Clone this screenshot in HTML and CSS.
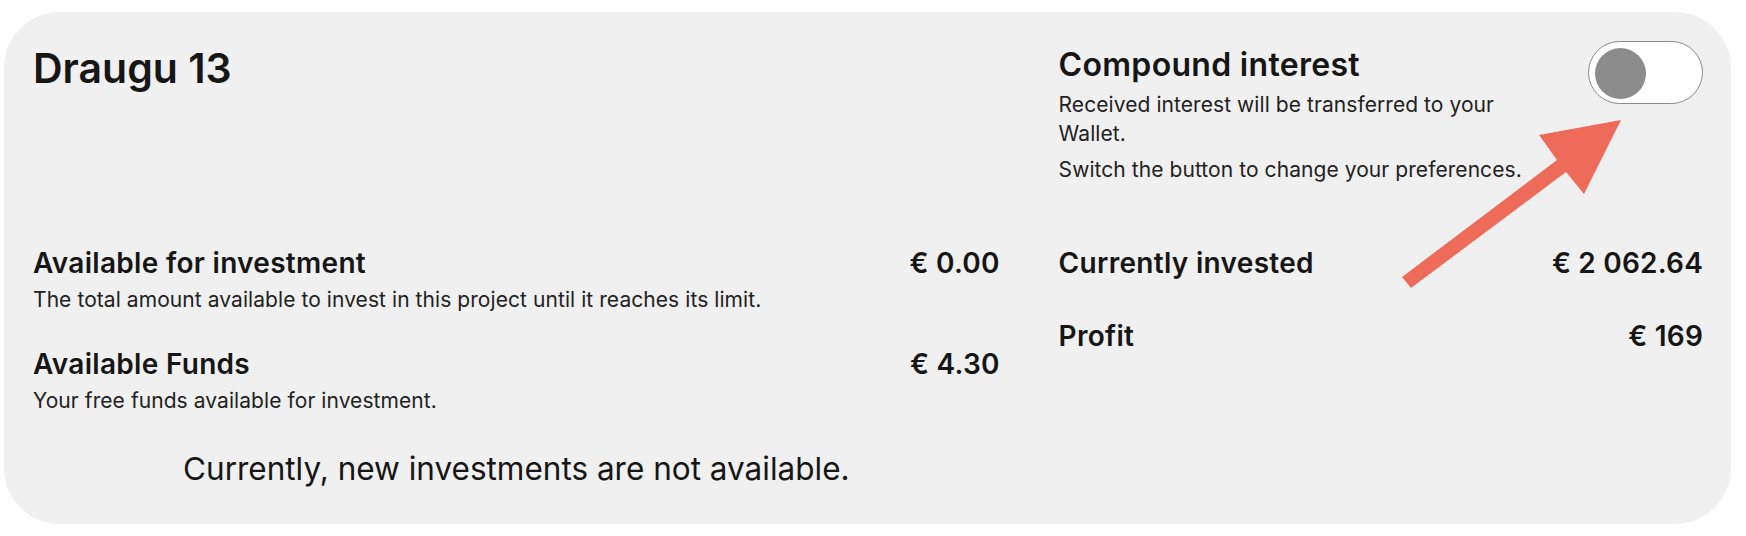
FILE: index.html
```html
<!DOCTYPE html>
<html lang="en">
<head>
    <meta charset="UTF-8">
    <meta name="viewport" content="width=device-width, initial-scale=1.0">
    <title>Draugu 13</title>
    <link rel="stylesheet" href="styles.css">
</head>
<body>
    <div class="card">
        <h2 class="title">Draugu 13</h2>

        <div class="option">
            <div class="option-text">
                <h3>Compound interest</h3>
                <p class="first">Received interest will be transferred to your Wallet.</p>
                <p class="second">Switch the button to change your preferences.</p>
            </div>
            <label class="toggle">
                <input type="checkbox" id="compound">
                <span class="knob"></span>
            </label>
        </div>

        <div class="stats">
            <div class="stat">
                <div class="stat-row">
                    <h4>Available for investment</h4>
                    <span class="amount">€ 0.00</span>
                </div>
                <p>The total amount available to invest in this project until it reaches its limit.</p>
            </div>
            <div class="stat next">
                <div class="stat-row">
                    <h4>Available Funds</h4>
                    <span class="amount">€ 4.30</span>
                </div>
                <p>Your free funds available for investment.</p>
            </div>
            <div class="note">Currently, new investments are not available.</div>
        </div>

        <div class="stats">
            <div class="stat">
                <div class="stat-row">
                    <h4>Currently invested</h4>
                    <span class="amount">€ 2 062.64</span>
                </div>
            </div>
            <div class="stat profit">
                <div class="stat-row">
                    <h4>Profit</h4>
                    <span class="amount">€ 169</span>
                </div>
            </div>
        </div>
    </div>

    <!-- annotation arrow pointing at the switch -->
    <svg class="arrow" viewBox="1395 115 230 180" width="230" height="180">
        <polygon points="1402,277 1557,160 1539,135 1621,120 1584,194 1566,172 1411,288" fill="#ee6b5a"/>
    </svg>
</body>
</html>
```
FILE: styles.css
```css
body {
    font-family: Inter, 'Noto Sans', sans-serif;
    color: #161616;
    background-color: #ffffff;
    margin: 0;
    padding: 12px 15px 13px 4px;
    position: relative;
}
.card {
    background-color: #f0f0f0;
    border-radius: 56px;
    padding: 29px 28px 36px 29px;
    display: grid;
    grid-template-columns: 3fr 2fr;
    column-gap: 59px;
    row-gap: 62px;
}
.title {
    font-size: 41px;
    font-weight: 600;
    line-height: 48px;
    margin: 3px 0 0;
}
.option {
    display: flex;
    justify-content: space-between;
    align-items: flex-start;
    gap: 40px;
}
.option-text {
    flex: 1;
}
.option h3 {
    font-size: 32px;
    font-weight: 600;
    line-height: 38px;
    letter-spacing: 0.3px;
    margin: 5px 0 0;
}
.option p {
    font-size: 21px;
    line-height: 29px;
    letter-spacing: 0.07px;
    color: #222;
    margin: 0;
}
.option p.first {
    margin-top: 6px;
}
.option p.second {
    margin-top: 7px;
}
.toggle {
    position: relative;
    flex: none;
    width: 113px;
    height: 61px;
    border: 1px solid #8a8a8a;
    border-radius: 32px;
    background-color: #ffffff;
    cursor: pointer;
}
.toggle input {
    display: none;
}
.knob {
    position: absolute;
    top: 6px;
    left: 6px;
    width: 51px;
    height: 51px;
    border-radius: 50%;
    background-color: #8c8c8c;
}
.stat-row {
    display: flex;
    justify-content: space-between;
    align-items: baseline;
}
.stat h4 {
    font-size: 28px;
    font-weight: 600;
    line-height: 34px;
    letter-spacing: 0.3px;
    margin: 0;
}
.amount {
    font-size: 28px;
    font-weight: 600;
    line-height: 34px;
    letter-spacing: 0.2px;
}
.stat p {
    font-size: 21px;
    line-height: 29px;
    letter-spacing: 0.07px;
    color: #222;
    margin: 5px 0 0;
}
.stat.next {
    margin-top: 33px;
}
.stat.profit {
    margin-top: 39px;
}
.note {
    font-size: 31.5px;
    line-height: 38px;
    text-align: center;
    margin-top: 35px;
}
.arrow {
    position: absolute;
    left: 1395px;
    top: 115px;
    pointer-events: none;
}
```
